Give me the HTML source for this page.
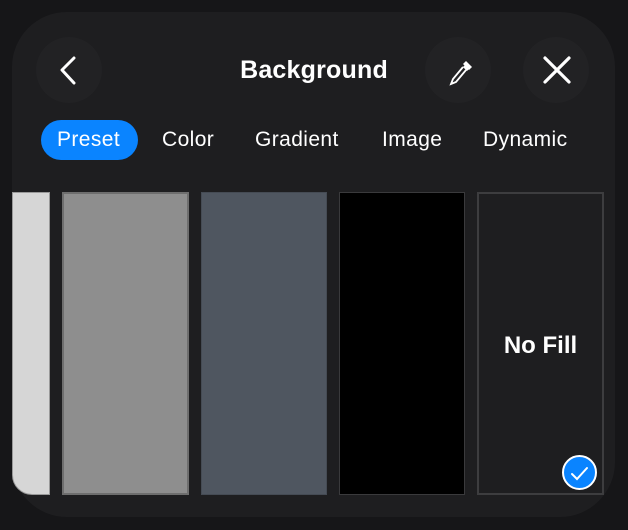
<html><head><style>
body{margin:0;width:628px;height:530px;background:#161618;font-family:"Liberation Sans",sans-serif;overflow:hidden;position:relative}
.p{position:absolute;left:12px;top:12px;width:603px;height:505px;background:#1e1e20;border-radius:55px;overflow:hidden}
.c{position:absolute;border-radius:50%;background:#222224;width:66px;height:66px;top:37px}
.t{position:absolute;top:56px;left:0;width:628px;text-align:center;color:#fff;font-size:25px;font-weight:bold;letter-spacing:0.2px}
.tab{position:absolute;top:128px;color:#fff;font-size:21px;letter-spacing:0.4px}
.s{position:absolute;top:192px;height:303px;box-sizing:border-box}
</style></head><body>
<div class="p"></div>
<div class="c" style="left:36px"></div>
<div class="c" style="left:425px"></div>
<div class="c" style="left:523px"></div>
<svg style="position:absolute;left:56px;top:56px" width="24" height="30"><path d="M18 2 L6 14 L18 27" stroke="#fff" stroke-width="3" fill="none" stroke-linecap="round" stroke-linejoin="round"/></svg>
<svg style="position:absolute;left:543px;top:56px" width="28" height="28"><path d="M2 2L26 26M26 2L2 26" stroke="#fff" stroke-width="3.2" stroke-linecap="round"/></svg>
<svg style="position:absolute;left:447px;top:57px" width="28" height="30"><path d="M17 9 L21 13" stroke="#fff" stroke-width="3"/><path d="M19 4 L25 10 L22 13 L16 7Z" fill="#fff"/><path d="M16 10 L6 22 L4 27 L9 25 L19 13" stroke="#fff" stroke-width="1.8" fill="none"/></svg>
<div class="t">Background</div>
<div style="position:absolute;left:41px;top:120px;width:97px;height:40px;border-radius:20px;background:#0a84ff"></div>
<div class="tab" style="left:57px">Preset</div>
<div class="tab" style="left:162px">Color</div>
<div class="tab" style="left:255px">Gradient</div>
<div class="tab" style="left:382px">Image</div>
<div class="tab" style="left:483px">Dynamic</div>
<div class="s" style="left:12px;width:38px;background:#d6d6d6;border:1px solid #999;border-radius:0 0 0 20px"></div>
<div class="s" style="left:62px;width:127px;background:#8e8e8e;border:2px solid #6e6e6e"></div>
<div class="s" style="left:201px;width:126px;background:#4f5660;border:1px solid #454b54"></div>
<div class="s" style="left:339px;width:126px;background:#000;border:1px solid #3a3a3c"></div>
<div class="s" style="left:477px;width:127px;border:2px solid #3d3d3f"></div>
<div style="position:absolute;left:477px;top:332px;width:127px;text-align:center;color:#fff;font-size:24px;font-weight:bold">No Fill</div>
<div style="position:absolute;left:562px;top:455px;width:31px;height:31px;border-radius:50%;background:#0a84ff;border:2px solid #fff"></div>
<svg style="position:absolute;left:564px;top:458px" width="31" height="31"><path d="M8 16 L13 21 L23 10" stroke="#fff" stroke-width="2" fill="none" stroke-linecap="round"/></svg>
</body></html>
